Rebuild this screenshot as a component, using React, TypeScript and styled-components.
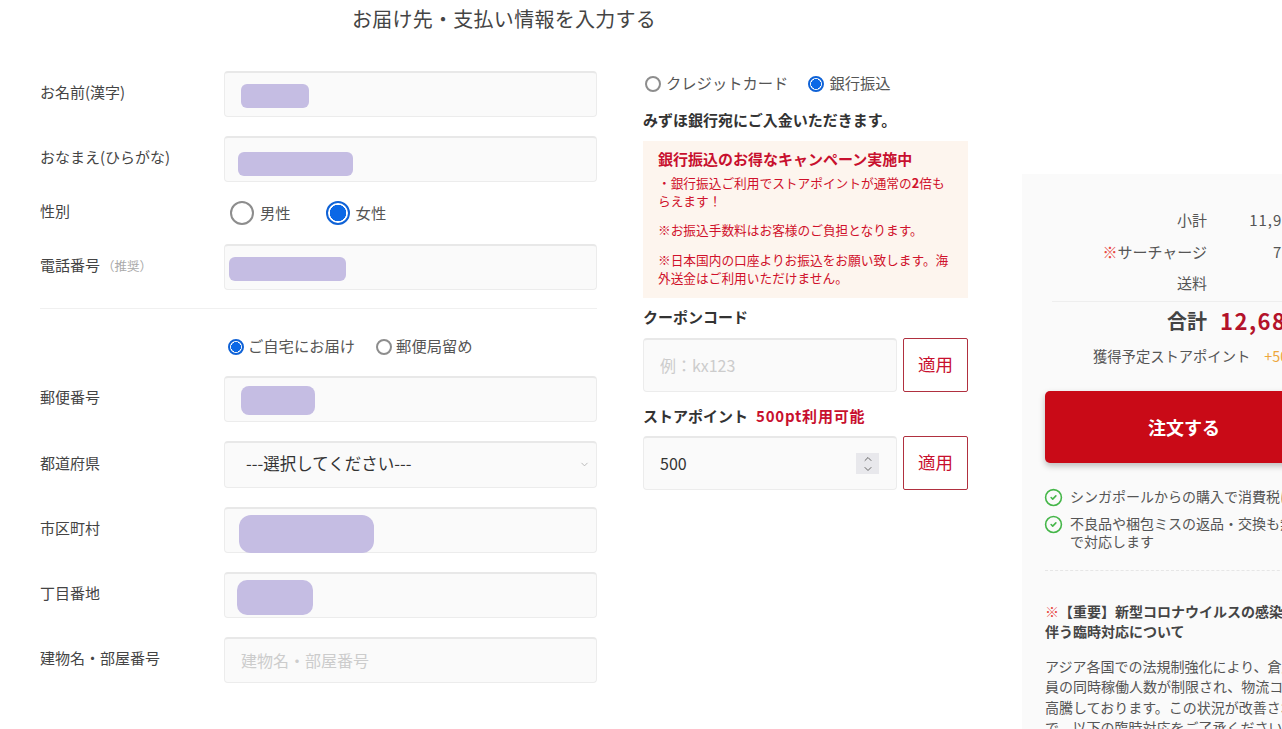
import React from "react";
import styled, { createGlobalStyle } from "styled-components";
import { ChevronDown, ChevronUp, CircleCheck } from "lucide-react";

const Global = createGlobalStyle`
  html, body { margin: 0; padding: 0; background: #fff; overflow: hidden; }
  body { font-family: "Noto Sans CJK JP", "Noto Sans", sans-serif; color: #444; }
  * { box-sizing: border-box; }
`;

const Page = styled.div`
  display: flex;
  width: 1282px;
  height: 729px;
  overflow: hidden;
`;
const Main = styled.main`
  flex: none;
  width: 968px;
  padding-left: 40px;
`;
const Title = styled.h1`
  margin: 0;
  height: 71px;
  padding-top: 5px;
  font-size: 20px;
  letter-spacing: 0.27px;
  line-height: 28px;
  font-weight: 400;
  text-align: center;
  color: #444;
`;
const Columns = styled.div`
  display: flex;
  gap: 46px;
`;
const FormCol = styled.form`
  flex: none;
  width: 557px;
`;
const Row = styled.div<{ $h: number; $mb?: number; $pt?: number }>`
  display: flex;
  align-items: center;
  height: ${(p) => p.$h}px;
  margin-bottom: ${(p) => p.$mb ?? 0}px;
  padding-top: ${(p) => p.$pt ?? 0}px;
`;
const Label = styled.label`
  flex: none;
  width: 184px;
  margin-top: -4px;
  font-size: 15px;
  line-height: 20px;
  color: #444;
`;
const Hint = styled.span`
  margin-left: 2px;
  font-size: 12.5px;
  color: #aaa;
`;
const Field = styled.div`
  position: relative;
  flex: 1;
  height: 100%;
`;
const Input = styled.input`
  display: block;
  width: 100%;
  height: 100%;
  padding: 0 16px 2px;
  border: 1px solid #ececec;
  border-top: 2px solid #e8e8e8;
  border-radius: 4px;
  background: #fafafa;
  font: inherit;
  font-size: 16px;
  color: #333;
  outline: none;
  &::placeholder { color: #ccc; }
`;
const Select = styled.select`
  display: block;
  width: 100%;
  height: 100%;
  padding: 0 0 4px 21px;
  border: 1px solid #ececec;
  border-top: 2px solid #e8e8e8;
  border-radius: 4px;
  background: #fafafa;
  font: inherit;
  font-size: 16.5px;
  color: #333;
  appearance: none;
  outline: none;
`;
const Chevron = styled.span`
  position: absolute;
  right: 7px;
  top: 18px;
  display: flex;
  color: #b5b5b5;
`;
const Redact = styled.div<{ $l: number; $t: number; $w: number; $h: number; $r?: number }>`
  position: absolute;
  left: ${(p) => p.$l}px;
  top: ${(p) => p.$t}px;
  width: ${(p) => p.$w}px;
  height: ${(p) => p.$h}px;
  border-radius: ${(p) => p.$r ?? 6}px;
  background: #c5bde3;
`;
const Radios = styled.div<{ $gap: number; $pl: number; $mt?: number }>`
  display: flex;
  align-items: center;
  gap: ${(p) => p.$gap}px;
  padding-left: ${(p) => p.$pl}px;
  margin-top: ${(p) => p.$mt ?? 0}px;
`;
const RadioLabel = styled.label<{ $gap?: number }>`
  display: flex;
  align-items: center;
  gap: ${(p) => p.$gap ?? 4}px;
  font-size: 15.3px;
  line-height: 20px;
  color: #555;
`;
const Radio = styled.input.attrs({ type: "radio" })<{ $size: number }>`
  appearance: none;
  flex: none;
  margin: ${(p) => (p.$size < 20 ? 3 : 1)}px 0 0;
  width: ${(p) => p.$size}px;
  height: ${(p) => p.$size}px;
  border-radius: 50%;
  border: 2px solid #8d8d8d;
  background: #fff;
  &:checked {
    border-color: #0f62d6;
    background: radial-gradient(circle, #0b68e6 0 56%, #fff 60%);
  }
`;
const Divider = styled.hr`
  height: 1px;
  margin: 0;
  border: 0;
  background: #f0f0f0;
`;
const MidCol = styled.section`
  flex: none;
  width: 325px;
  padding-top: 1px;
`;
const BoldLine = styled.div<{ $mt?: number }>`
  margin-top: ${(p) => p.$mt ?? 0}px;
  font-size: 15px;
  line-height: 20px;
  font-weight: 700;
  color: #333;
`;
const Strong = styled.span`
  margin-left: 8px;
  letter-spacing: 0.8px;
  color: #c8102e;
`;
const Notice = styled.div`
  height: 157px;
  margin-top: 11px;
  padding: 7px 17px 0 15px;
  background: #fdf5ee;
  color: #d0112b;
`;
const NoticeTitle = styled.div`
  font-size: 15px;
  line-height: 21px;
  font-weight: 700;
  color: #c8102e;
`;
const NoticeText = styled.p<{ $mt: number }>`
  margin: ${(p) => p.$mt}px 0 0;
  font-size: 12.7px;
  line-height: 18px;
`;
const ApplyRow = styled.div<{ $mt: number }>`
  display: flex;
  gap: 6px;
  height: 54px;
  margin-top: ${(p) => p.$mt}px;
  margin-bottom: 14px;
`;
const Apply = styled.button`
  flex: none;
  width: 65px;
  height: 54px;
  padding: 0 0 3px;
  border: 1px solid #b0303f;
  border-radius: 2px;
  background: #fff;
  color: #c8102e;
  font: inherit;
  font-size: 17.5px;
`;
const Spinner = styled.span`
  position: absolute;
  right: 18px;
  top: 17px;
  width: 23px;
  height: 21px;
  display: flex;
  flex-direction: column;
  align-items: center;
  justify-content: center;
  background: #e8e8ec;
  color: #666;
  svg { margin: -1px 0; }
`;
const SideWrap = styled.aside`
  flex: none;
  width: 314px;
  margin: 174px 0 0 54px;
  padding: 30px 0 0 23px;
  background: #fafafa;
  white-space: nowrap;
`;
const SumRow = styled.div`
  display: flex;
  height: 31.5px;
  align-items: center;
  font-size: 15px;
  color: #555;
`;
const SumLabel = styled.span`
  flex: none;
  width: 162px;
  text-align: right;
`;
const Mark = styled.span`
  color: #e8473f;
`;
const SumValue = styled.span`
  flex: none;
  width: 110px;
  text-align: right;
  letter-spacing: 1px;
`;
const SumDivider = styled.hr`
  width: 240px;
  height: 1px;
  margin: 2.5px 0 0 7px;
  border: 0;
  background: #eee;
`;
const TotalRow = styled.div`
  display: flex;
  align-items: center;
  height: 36px;
`;
const TotalLabel = styled.span`
  flex: none;
  width: 162px;
  text-align: right;
  font-size: 20px;
  font-weight: 700;
  color: #444;
`;
const TotalValue = styled.span`
  margin-left: 13px;
  font-size: 22px;
  font-weight: 700;
  letter-spacing: 1.5px;
  color: #b3122a;
`;
const PointRow = styled.div`
  margin: 8px 0 0 48px;
  font-size: 14.3px;
  line-height: 20px;
  color: #555;
`;
const Plus = styled.span`
  margin-left: 14px;
  color: #eda73c;
`;
const Order = styled.button`
  display: block;
  width: 276px;
  height: 72px;
  margin-top: 25px;
  padding: 0;
  border: 0;
  border-radius: 5px;
  background: #c90a17;
  box-shadow: 0 3px 6px rgba(0, 0, 0, 0.25);
  color: #fff;
  font: inherit;
  font-size: 18px;
  font-weight: 700;
  text-align: left;
  text-indent: 103px;
`;
const Checks = styled.ul`
  list-style: none;
  margin: 24px 0 0;
  padding: 0;
`;
const Check = styled.li`
  display: flex;
  align-items: flex-start;
  gap: 7px;
  margin-bottom: 7px;
  font-size: 14px;
  line-height: 18px;
  color: #555;
  svg { flex: none; color: #45b649; margin: 1px 0 0 -1px; }
`;
const Dashed = styled.hr`
  width: 260px;
  height: 0;
  margin: 20px 0 0;
  border: 0;
  border-top: 1px dashed #e6e6e6;
`;
const NewsTitle = styled.h2`
  margin: 30px 0 0;
  font-size: 14px;
  line-height: 20px;
  font-weight: 700;
  color: #444;
`;
const NewsBody = styled.p`
  margin: 15px 0 0;
  font-size: 14px;
  line-height: 20.4px;
  color: #555;
`;

export default function App() {
  return (
    <Page>
      <Global />
      <Main>
        <Title>お届け先・支払い情報を入力する</Title>
        <Columns>
          <FormCol>
            <Row $h={46} $mb={19}>
              <Label>お名前(漢字)</Label>
              <Field>
                <Input readOnly />
                <Redact $l={17} $t={13} $w={68} $h={24} />
              </Field>
            </Row>
            <Row $h={46}>
              <Label>おなまえ(ひらがな)</Label>
              <Field>
                <Input readOnly />
                <Redact $l={14} $t={16} $w={115} $h={24} />
              </Field>
            </Row>
            <Row $h={62}>
              <Label>性別</Label>
              <Radios $gap={35} $pl={6} $mt={-2}>
                <RadioLabel $gap={6}><Radio $size={24} name="sex" />男性</RadioLabel>
                <RadioLabel $gap={6}><Radio $size={24} name="sex" defaultChecked />女性</RadioLabel>
              </Radios>
            </Row>
            <Row $h={46} $mb={18}>
              <Label>電話番号<Hint>（推奨）</Hint></Label>
              <Field>
                <Input readOnly />
                <Redact $l={5} $t={13} $w={117} $h={24} />
              </Field>
            </Row>
            <Divider />
            <Row $h={67} $pt={5}>
              <Label />
              <Radios $gap={21} $pl={4}>
                <RadioLabel><Radio $size={16} name="ship" defaultChecked />ご自宅にお届け</RadioLabel>
                <RadioLabel><Radio $size={16} name="ship" />郵便局留め</RadioLabel>
              </Radios>
            </Row>
            <Row $h={46} $mb={19}>
              <Label>郵便番号</Label>
              <Field>
                <Input readOnly />
                <Redact $l={17} $t={10} $w={74} $h={29} $r={8} />
              </Field>
            </Row>
            <Row $h={47} $mb={19}>
              <Label>都道府県</Label>
              <Field>
                <Select defaultValue="">
                  <option value="">---選択してください---</option>
                </Select>
                <Chevron><ChevronDown size={11} strokeWidth={2} /></Chevron>
              </Field>
            </Row>
            <Row $h={46} $mb={19}>
              <Label>市区町村</Label>
              <Field>
                <Input readOnly />
                <Redact $l={15} $t={8} $w={135} $h={38} $r={12} />
              </Field>
            </Row>
            <Row $h={46} $mb={19}>
              <Label>丁目番地</Label>
              <Field>
                <Input readOnly />
                <Redact $l={13} $t={8} $w={76} $h={35} $r={10} />
              </Field>
            </Row>
            <Row $h={46}>
              <Label>建物名・部屋番号</Label>
              <Field>
                <Input placeholder="建物名・部屋番号" />
              </Field>
            </Row>
          </FormCol>
          <MidCol>
            <Radios $gap={20} $pl={2}>
              <RadioLabel $gap={5}><Radio $size={16} name="pay" />クレジットカード</RadioLabel>
              <RadioLabel $gap={5}><Radio $size={16} name="pay" defaultChecked />銀行振込</RadioLabel>
            </Radios>
            <BoldLine $mt={18}>みずほ銀行宛にご入金いただきます。</BoldLine>
            <Notice>
              <NoticeTitle>銀行振込のお得なキャンペーン実施中</NoticeTitle>
              <NoticeText $mt={5}>・銀行振込ご利用でストアポイントが通常の<b>2</b>倍もらえます！</NoticeText>
              <NoticeText $mt={11}>※お振込手数料はお客様のご負担となります。</NoticeText>
              <NoticeText $mt={12}>※日本国内の口座よりお振込をお願い致します。海外送金はご利用いただけません。</NoticeText>
            </Notice>
            <BoldLine $mt={9}>クーポンコード</BoldLine>
            <ApplyRow $mt={11}>
              <Field>
                <Input placeholder="例：kx123" />
              </Field>
              <Apply type="button">適用</Apply>
            </ApplyRow>
            <BoldLine>ストアポイント<Strong>500pt利用可能</Strong></BoldLine>
            <ApplyRow $mt={10}>
              <Field>
                <Input readOnly value="500" />
                <Spinner>
                  <ChevronUp size={12} strokeWidth={2} />
                  <ChevronDown size={12} strokeWidth={2} />
                </Spinner>
              </Field>
              <Apply type="button">適用</Apply>
            </ApplyRow>
          </MidCol>
        </Columns>
      </Main>
      <SideWrap>
        <SumRow><SumLabel>小計</SumLabel><SumValue>11,980円</SumValue></SumRow>
        <SumRow><SumLabel><Mark>※</Mark>サーチャージ</SumLabel><SumValue>700円</SumValue></SumRow>
        <SumRow><SumLabel>送料</SumLabel><SumValue>無料</SumValue></SumRow>
        <SumDivider />
        <TotalRow><TotalLabel>合計</TotalLabel><TotalValue>12,680円</TotalValue></TotalRow>
        <PointRow>獲得予定ストアポイント<Plus>+500pt</Plus></PointRow>
        <Order type="button">注文する</Order>
        <Checks>
          <Check><CircleCheck size={19} />シンガポールからの購入で消費税はかかりません</Check>
          <Check><CircleCheck size={19} /><span>不良品や梱包ミスの返品・交換も無料<br />で対応します</span></Check>
        </Checks>
        <Dashed />
        <NewsTitle><Mark>※</Mark>【重要】新型コロナウイルスの感染拡大に<br />伴う臨時対応について</NewsTitle>
        <NewsBody>
          アジア各国での法規制強化により、倉庫作業<br />
          員の同時稼働人数が制限され、物流コストが<br />
          高騰しております。この状況が改善されるま<br />
          で、以下の臨時対応をご了承ください
        </NewsBody>
      </SideWrap>
    </Page>
  );
}
